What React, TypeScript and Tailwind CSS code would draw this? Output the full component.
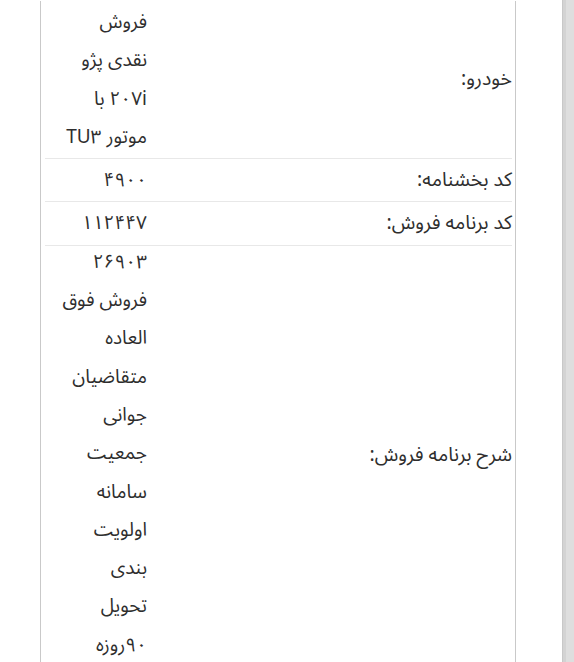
import React from "react";

type Row = { label: string; lines: string[]; last?: boolean };

const rows: Row[] = [
  { label: "خودرو:", lines: ["فروش", "نقدی پژو", "۲۰۷i با", "موتور TU۳"] },
  { label: "کد بخشنامه:", lines: ["۴۹۰۰"] },
  { label: "کد برنامه فروش:", lines: ["۱۱۲۴۴۷"] },
  {
    label: "شرح برنامه فروش:",
    last: true,
    lines: [
      "۲۶۹۰۳",
      "فروش فوق",
      "العاده",
      "متقاضیان",
      "جوانی",
      "جمعیت",
      "سامانه",
      "اولویت",
      "بندی",
      "تحویل",
      "۹۰روزه",
    ],
  },
];

export default function App() {
  return (
    <div
      className="flex h-[662px] w-full overflow-hidden bg-white text-[#2e2e2e]"
      style={{ fontFamily: "'Noto Sans Arabic', 'DejaVu Sans', sans-serif" }}
    >
      <div className="w-[562px] shrink-0">
        <div className="ml-[40px] w-[476px] min-h-[662px] border-x border-[#c9c9c9] bg-white pl-[4px] pr-[3px]">
          <div className="mt-[1px]" dir="rtl">
            {rows.map((r, i) => (
              <div
                key={i}
                className={
                  r.last
                    ? "flex border-b border-[#e8e8e8] pb-[2px]"
                    : "flex border-b border-[#e8e8e8] py-[2px]"
                }
              >
                <div className="flex w-[365px] shrink-0 items-center text-[19.5px] leading-[38.3px]">
                  {r.label}
                </div>
                <div
                  className={
                    r.last
                      ? "-mt-[3px] flex-1 text-[19px] leading-[38.3px]"
                      : "flex-1 text-[19px] leading-[38.3px]"
                  }
                >
                  {r.lines.map((l, j) => (
                    <div key={j} className="whitespace-nowrap">
                      {l}
                    </div>
                  ))}
                </div>
              </div>
            ))}
          </div>
        </div>
      </div>
      <div className="flex flex-1 border-l border-[#c8c8c8] bg-[#dedede]">
        <div className="w-[3px] bg-[#d3d3d3]" />
      </div>
    </div>
  );
}
